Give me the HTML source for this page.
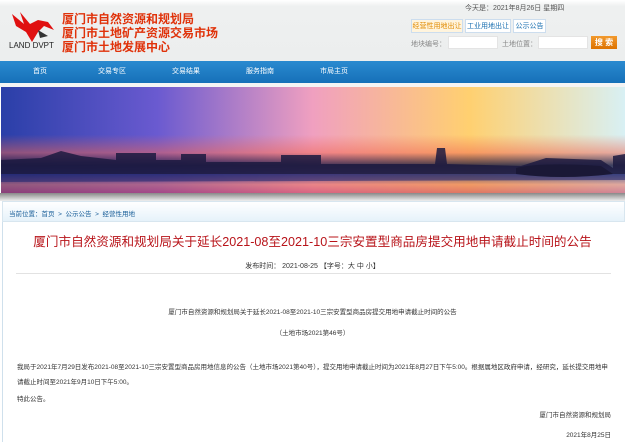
<!DOCTYPE html><html><head><meta charset="utf-8"><style>
*{margin:0;padding:0;box-sizing:border-box}
body{width:625px;height:442px;overflow:hidden;background:#fff;font-family:"Liberation Sans","Noto Sans CJK SC",sans-serif;position:relative}
.a{position:absolute}
.s{font-size:7px;color:#555;white-space:nowrap}
</style></head><body>
<div class="a" style="left:0;top:0;width:625px;height:62px;background:linear-gradient(#fff,#eef0f0 10%,#eceeee)"></div>
<svg class="a" style="left:8px;top:10px" width="48" height="36" viewBox="0 0 48 36"><path d="M4 4 L16 14 L12 2 L22 14 L30 10 L40 12 L46 20 L36 16 L30 22 L24 32 L18 22 L8 16 Z" fill="#e01010"/><path d="M30 20 L40 26 L32 28 Z" fill="#333"/></svg>
<div class="a" style="left:9px;top:41px;font-size:8px;color:#222">LAND DVPT</div>
<div class="a" style="left:62px;top:12px;font-size:12px;line-height:14px;font-weight:bold;color:#e0320a">厦门市自然资源和规划局<br>厦门市土地矿产资源交易市场<br>厦门市土地发展中心</div>
<div class="a s" style="left:465px;top:3px">今天是：2021年8月26日 星期四</div>
<div class="a s" style="left:411px;top:19px;width:52px;height:14px;line-height:14px;border:1px solid #cde;background:#fff4dd;color:#e08a00;text-align:center">经营性用地出让</div>
<div class="a s" style="left:465px;top:19px;width:46px;height:14px;line-height:14px;border:1px solid #cde;background:#fff;color:#1a6fb0;text-align:center">工业用地出让</div>
<div class="a s" style="left:513px;top:19px;width:33px;height:14px;line-height:14px;border:1px solid #cde;background:#fff;color:#1a6fb0;text-align:center">公示公告</div>
<div class="a s" style="left:411px;top:39px;color:#888">地块编号：</div>
<div class="a" style="left:448px;top:36px;width:50px;height:13px;background:#fff;border:1px solid #e4e4e4"></div>
<div class="a s" style="left:502px;top:39px;color:#888">土地位置：</div>
<div class="a" style="left:538px;top:36px;width:50px;height:13px;background:#fff;border:1px solid #e4e4e4"></div>
<div class="a" style="left:591px;top:36px;width:26px;height:13px;background:linear-gradient(#f29a2e,#dd7200);color:#fff;font-size:8px;font-weight:bold;text-align:center;line-height:13px">搜 索</div>
<div class="a" style="left:0;top:61px;width:625px;height:22px;background:linear-gradient(#2a8ad0,#1670b8)"></div>
<div class="a" style="top:61px;left:0;height:22px;line-height:22px;font-size:7px;color:#fff;width:625px">
<span class="a" style="left:33px">首页</span><span class="a" style="left:98px">交易专区</span><span class="a" style="left:172px">交易结果</span><span class="a" style="left:246px">服务指南</span><span class="a" style="left:320px">市局主页</span></div>
<div class="a" style="left:0;top:83px;width:625px;height:4px;background:#f4f4f4"></div>
<div class="a" style="left:1px;top:87px;width:624px;height:106px;background:linear-gradient(90deg,#2a3fa8,#6a5ad0 25%,#f0a0c0 50%,#ffd070 75%,#d8f0f4)"></div>
<div class="a" style="left:1px;top:87px;width:624px;height:106px;background:linear-gradient(rgba(0,0,0,0),rgba(0,0,0,0) 45%,rgba(240,100,80,.5) 62%,rgba(20,20,60,.8) 74%,rgba(30,40,110,.7) 82%,rgba(230,110,90,.55) 92%,rgba(200,60,90,.6))"></div>
<svg class="a" style="left:1px;top:140px" width="624" height="53" viewBox="0 0 624 53"><path d="M0 20 L40 18 L60 11 L80 16 L115 20 L115 13 L155 13 L155 20 L180 20 L180 14 L205 14 L205 22 L280 22 L280 15 L320 15 L320 24 L434 24 L436 8 L444 8 L446 24 L520 26 L545 18 L600 20 L612 28 L612 16 L624 14 L624 34 L0 34Z" fill="#1c1a40" opacity=".85"/><path d="M0 34 L624 34 L624 40 L0 42Z" fill="#262a70" opacity=".6"/><path d="M515 28 Q540 22 600 26 L612 34 Q560 40 515 34Z" fill="#1a1836"/></svg>
<div class="a" style="left:0;top:193px;width:625px;height:8px;background:linear-gradient(#888,#eee)"></div>
<div class="a" style="left:2px;top:201px;width:623px;height:21px;background:linear-gradient(#fff,#e6f2fa);border:1px solid #d8e6ef"></div>
<div class="a s" style="left:9px;top:208px;color:#1a5f99;font-size:6.5px">当前位置：首页 &nbsp;&gt;&nbsp; 公示公告 &nbsp;&gt;&nbsp; 经营性用地</div>
<div class="a" style="left:2px;top:222px;width:1px;height:220px;background:#cfe0ec"></div>
<div class="a" style="left:0;top:231px;width:625px;text-align:center;font-size:12.6px;color:#b8141a;white-space:nowrap">厦门市自然资源和规划局关于延长2021-08至2021-10三宗安置型商品房提交用地申请截止时间的公告</div>
<div class="a s" style="left:0;width:625px;text-align:center;top:261px;color:#333">发布时间： 2021-08-25 【字号：大 中 小】</div>
<div class="a" style="left:16px;top:273px;width:595px;height:1px;background:#e2e2e2"></div>
<div class="a s" style="left:0;width:625px;text-align:center;top:306px;color:#333;font-size:6.5px">厦门市自然资源和规划局关于延长2021-08至2021-10三宗安置型商品房提交用地申请截止时间的公告</div>
<div class="a s" style="left:0;width:625px;text-align:center;top:327px;color:#333;font-size:6.5px">（土地市场2021第46号）</div>
<div class="a s" style="left:17px;top:360px;color:#333;font-size:6.5px;line-height:15px">我局于2021年7月29日发布2021-08至2021-10三宗安置型商品房用地信息的公告（土地市场2021第40号），提交用地申请截止时间为2021年8月27日下午5:00。根据属地区政府申请，经研究，延长提交用地申<br>请截止时间至2021年9月10日下午5:00。</div>
<div class="a s" style="left:17px;top:393px;color:#333;font-size:6.5px">特此公告。</div>
<div class="a s" style="right:14px;top:409px;color:#333;font-size:6.5px">厦门市自然资源和规划局</div>
<div class="a s" style="right:14px;top:429px;color:#333;font-size:6.5px">2021年8月25日</div>
</body></html>
